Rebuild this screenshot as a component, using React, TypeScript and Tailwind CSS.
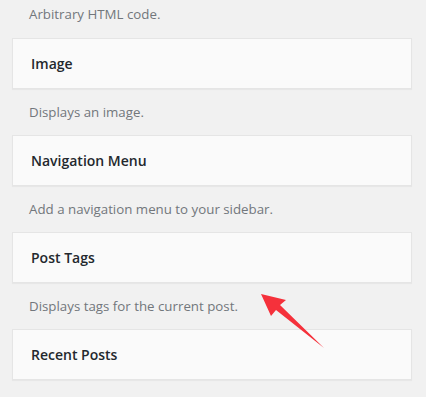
const widgets = [
  { title: 'Image', desc: 'Displays an image.' },
  { title: 'Navigation Menu', desc: 'Add a navigation menu to your sidebar.' },
  { title: 'Post Tags', desc: 'Displays tags for the current post.' },
  { title: 'Recent Posts', desc: '' },
];

export default function App() {
  return (
    <div
      className="relative w-[426px] h-[397px] overflow-hidden bg-[#f1f1f1]"
      style={{ fontFamily: '"Open Sans", "Noto Sans", sans-serif' }}
    >
      <div className="-mt-[8px] pl-[12px] pr-[14px]">
        {/* Previous widget description */}
        <div className="h-[46px] flex items-center pl-[17px] text-[13.3px] text-[#72777c]">
          Arbitrary HTML code.
        </div>

        {widgets.map((w) => (
          <div key={w.title}>
            <div className="h-[51px] flex items-center pl-[18px] bg-[#fafafa] border border-[#e5e5e5] shadow-[0_1px_1px_rgba(0,0,0,0.04)]">
              <h3 className="text-[14px] font-semibold text-[#23282d]">{w.title}</h3>
            </div>
            <div className="h-[46px] flex items-center pl-[17px] pt-[2px] text-[13.3px] text-[#72777c]">
              {w.desc}
            </div>
          </div>
        ))}
      </div>

      {/* Red annotation arrow */}
      <svg
        className="absolute left-0 top-0 pointer-events-none"
        width="426"
        height="397"
        viewBox="0 0 426 397"
      >
        <path
          d="M261 294 L286 300 L280 305 L324 348 L276 310 L271 316 Z"
          fill="#f5313b"
        />
      </svg>
    </div>
  );
}
